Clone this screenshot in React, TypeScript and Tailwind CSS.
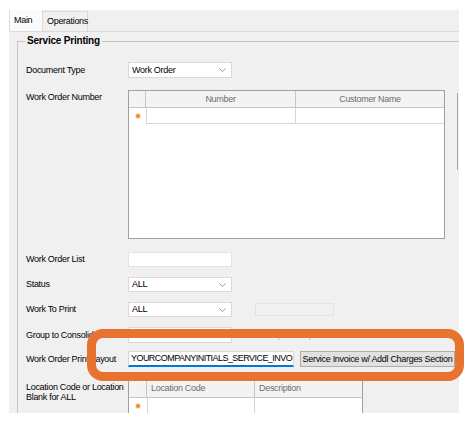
import React from "react";

function Chevron() {
  return (
    <svg width="7" height="4" viewBox="0 0 7 4" className="mr-[5px] shrink-0">
      <path d="M0.5 0.5 L3.5 3.5 L6.5 0.5" fill="none" stroke="#8a8a8a" strokeWidth="0.9" />
    </svg>
  );
}

function Dropdown({ value, h = 15 }: { value: string; h?: number }) {
  return (
    <div
      className="w-[104px] bg-white border border-[#d9d9d9] flex items-center justify-between pl-[3px]"
      style={{ height: h }}
    >
      <span>{value}</span>
      <Chevron />
    </div>
  );
}

function NewRowMark() {
  return (
    <svg width="6" height="6" viewBox="0 0 6 6">
      <circle cx="3" cy="3" r="2.6" fill="#f9b97a" />
      <circle cx="3" cy="3" r="1.7" fill="#f28a1e" />
    </svg>
  );
}

function Row({ label, children, className = "" }: { label: React.ReactNode; children: React.ReactNode; className?: string }) {
  return (
    <div className={`flex items-center ${className}`}>
      <div className="w-[102px] shrink-0">{label}</div>
      {children}
    </div>
  );
}

export default function App() {
  return (
    <div className="relative w-[468px] h-[426px] bg-white overflow-hidden font-['Liberation_Sans','Arial',sans-serif] text-[9px] tracking-[-0.3px] text-black leading-none">
      <div className="relative ml-[9px] mt-[10px] w-[450px] h-[403px] bg-[#f0f0f0] overflow-hidden">
        {/* tabs */}
        <div className="flex items-end h-[22px] border-b border-[#dadada]">
          <div className="w-[34px] h-[22px] bg-[#fbfbfb] border border-b-0 border-[#dadada] flex items-center pl-[4px]">
            Main
          </div>
          <div className="w-[45px] h-[20px] bg-[#f0f0f0] border border-b-0 border-l-0 border-[#dadada] flex items-center pl-[4px]">
            Operations
          </div>
        </div>

        {/* group box */}
        <div className="relative ml-[8px] mt-[9px] border-l border-t border-[#c4c4c4] h-[400px]">
          <div className="absolute -top-[6px] left-[7px] bg-[#f0f0f0] px-[2px] font-bold text-[10px] tracking-[-0.2px]">
            Service Printing
          </div>

          <div className="pl-[8px] pt-[20px]">
            <Row label="Document Type">
              <Dropdown value="Work Order" h={16} />
            </Row>

            <div className="flex mt-[12px]">
              <div className="w-[102px] shrink-0 pt-[3px]">Work Order Number</div>
              <div className="w-[317px] h-[149px] bg-white border border-[#a0a0a0] text-[#6d6d6d]">
                <div className="flex h-[17px] bg-[#f3f3f3] border-b border-[#c6c6c6]">
                  <div className="w-[17px] border-r border-[#c6c6c6]" />
                  <div className="w-[150px] border-r border-[#c6c6c6] flex items-center justify-center">Number</div>
                  <div className="flex-1 flex items-center justify-center">Customer Name</div>
                </div>
                <div className="flex h-[16px]">
                  <div className="w-[17px] flex items-center justify-center">
                    <NewRowMark />
                  </div>
                  <div className="w-[150px] border-l border-r border-b border-[#d6d6d6]" />
                  <div className="flex-1 border-b border-[#d6d6d6]" />
                </div>
              </div>
            </div>

            <Row label="Work Order List" className="mt-[13px]">
              <div className="w-[104px] h-[15px] bg-white border border-[#e3e3e3]" />
            </Row>

            <Row label="Status" className="mt-[10px]">
              <Dropdown value="ALL" />
            </Row>

            <Row label="Work To Print" className="mt-[10px]">
              <Dropdown value="ALL" />
              <div className="ml-[23px] w-[79px] h-[13px] border border-[#e3e3e3] bg-[#f0f0f0]" />
            </Row>

            <Row label="Group to Consolidate" className="mt-[10px]">
              <Dropdown value="None" h={16} />
              <span className="ml-[10px] text-[#b4b4b4]">Use Group Description</span>
            </Row>

            <Row label="Work Order Print Layout" className="mt-[8px]">
              <div className="w-[166px] h-[16px] bg-white border border-[#d9d9d9] border-b-2 border-b-[#0078d7] flex items-center pl-[2px] overflow-hidden whitespace-nowrap tracking-[-0.55px]">
                YOURCOMPANYINITIALS_SERVICE_INVO
              </div>
              <div className="ml-[6px] w-[155px] h-[16px] shrink-0 bg-[#e1e1e1] border border-[#adadad] flex items-center justify-center whitespace-nowrap">
                Service Invoice w/ Addl Charges Section
              </div>
            </Row>

            <div className="flex mt-[11px]">
              <div className="w-[102px] shrink-0 pt-[4px] leading-[10px]">
                Location Code or Location
                <br />
                Blank for ALL
              </div>
              <div className="w-[235px] h-[60px] bg-white border border-[#a0a0a0] text-[#6d6d6d]">
                <div className="flex h-[19px] bg-[#f3f3f3] border-b border-[#c6c6c6]">
                  <div className="w-[18px] border-r border-[#c6c6c6]" />
                  <div className="w-[108px] border-r border-[#c6c6c6] flex items-center pl-[4px]">Location Code</div>
                  <div className="flex-1 flex items-center pl-[4px]">Description</div>
                </div>
                <div className="flex h-[16px]">
                  <div className="w-[18px] flex items-center justify-center">
                    <NewRowMark />
                  </div>
                  <div className="w-[108px] border-l border-r border-b border-[#d6d6d6]" />
                  <div className="flex-1 border-b border-[#d6d6d6]" />
                </div>
              </div>
            </div>
          </div>
        </div>

        {/* scrollbar edge */}
        <div className="absolute left-[448px] top-[83px] w-[1px] h-[77px] bg-[#a8a8a8]" />
      </div>

      {/* orange highlight annotation */}
      <div className="absolute left-[87px] top-[329px] w-[377px] h-[52px] border-[9px] border-[#e8722f] rounded-[16px]" />
    </div>
  );
}
